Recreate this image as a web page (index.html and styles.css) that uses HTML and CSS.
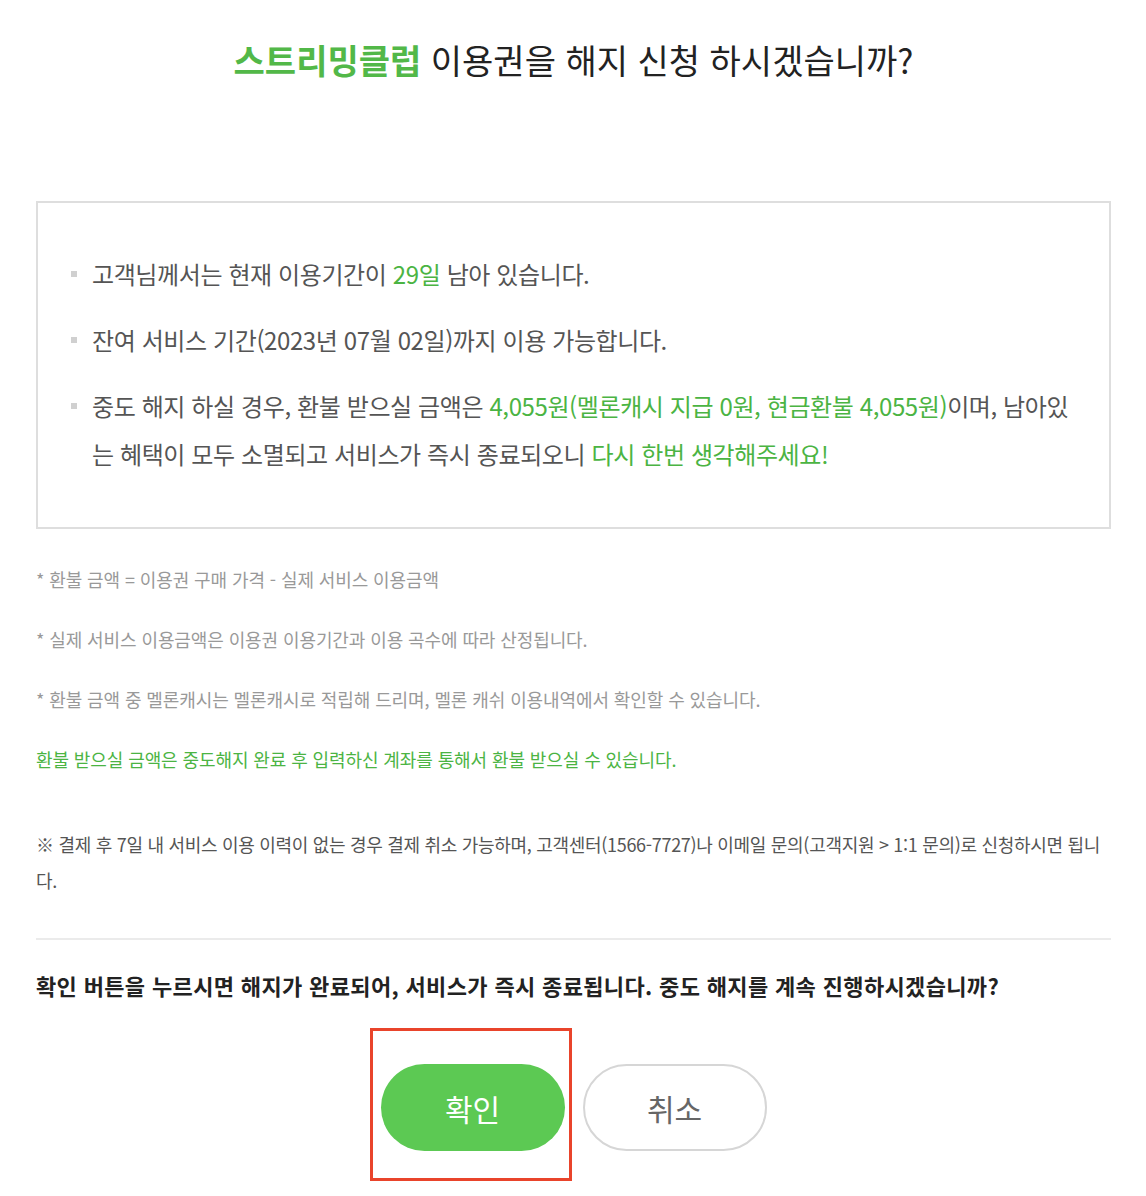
FILE: index.html
```html
<!DOCTYPE html>
<html lang="ko">
<head>
    <meta charset="UTF-8">
    <title>이용권 해지 신청</title>
    <link rel="stylesheet" href="styles.css">
</head>
<body>
    <div class="container">
        <h2 class="title"><strong>스트리밍클럽</strong> 이용권을 해지 신청 하시겠습니까?</h2>

        <div class="info-box">
            <ul class="info-list">
                <li>고객님께서는 현재 이용기간이 <span class="green">29일</span> 남아 있습니다.</li>
                <li>잔여 서비스 기간(2023년 07월 02일)까지 이용 가능합니다.</li>
                <li>중도 해지 하실 경우, 환불 받으실 금액은 <span class="green">4,055원(멜론캐시 지급 0원, 현금환불 4,055원)</span>이며, 남아있는 혜택이 모두 소멸되고 서비스가 즉시 종료되오니 <span class="green">다시 한번 생각해주세요!</span></li>
            </ul>
        </div>

        <!-- notes -->
        <div class="notes">
            <p>* 환불 금액 = 이용권 구매 가격 - 실제 서비스 이용금액</p>
            <p>* 실제 서비스 이용금액은 이용권 이용기간과 이용 곡수에 따라 산정됩니다.</p>
            <p>* 환불 금액 중 멜론캐시는 멜론캐시로 적립해 드리며, 멜론 캐쉬 이용내역에서 확인할 수 있습니다.</p>
            <p class="green">환불 받으실 금액은 중도해지 완료 후 입력하신 계좌를 통해서 환불 받으실 수 있습니다.</p>
        </div>

        <p class="cancel-note">※ 결제 후 7일 내 서비스 이용 이력이 없는 경우 결제 취소 가능하며, 고객센터(1566-7727)나 이메일 문의(고객지원 &gt; 1:1 문의)로 신청하시면 됩니다.</p>

        <hr class="divider">

        <p class="confirm-text">확인 버튼을 누르시면 해지가 완료되어, 서비스가 즉시 종료됩니다. 중도 해지를 계속 진행하시겠습니까?</p>

        <div class="buttons">
            <div class="btn-wrap">
                <button type="button" class="btn btn-ok">확인</button>
                <span class="highlight"></span>
            </div>
            <button type="button" class="btn btn-cancel">취소</button>
        </div>
    </div>
</body>
</html>
```

FILE: styles.css
```css
body {
    margin: 0;
    background-color: #fff;
    font-family: "Noto Sans CJK KR", "Noto Sans", sans-serif;
    color: #555;
}

.container {
    padding: 0 35px 0 36px;
}

.green {
    color: #4bb443;
}

.title {
    margin: 37px 0 0;
    font-size: 34px;
    line-height: 46px;
    font-weight: normal;
    text-align: center;
    color: #222;
}

.title strong {
    color: #52b848;
    font-weight: bold;
}

.info-box {
    margin-top: 118px;
    border: 2px solid #dedede;
    padding: 47px 40px 49px 54px;
}

.info-list {
    margin: 0;
    padding: 0;
    list-style: none;
}

.info-list li {
    position: relative;
    font-size: 24px;
    line-height: 48px;
    letter-spacing: -0.4px;
    color: #555;
}

.info-list li + li {
    margin-top: 18px;
}

.info-list li::before {
    content: "";
    position: absolute;
    left: -21px;
    top: 21px;
    width: 6px;
    height: 6px;
    background-color: #d0d0d0;
}

.notes {
    margin-top: 35px;
}

.notes p {
    margin: 0 0 30px;
    font-size: 18px;
    line-height: 30px;
    letter-spacing: -0.1px;
    color: #999;
}

.notes p.green {
    color: #4bb443;
    margin-bottom: 0;
}

.cancel-note {
    margin: 52px 0 0;
    font-size: 18px;
    line-height: 36px;
    letter-spacing: -0.3px;
    color: #555;
}

.divider {
    margin: 40px 0 0;
    border: none;
    border-top: 2px solid #ebebeb;
}

.confirm-text {
    margin: 30px 0 0;
    font-size: 22px;
    line-height: 30px;
    letter-spacing: 0.35px;
    font-weight: bold;
    color: #222;
}

.buttons {
    display: flex;
    justify-content: center;
    gap: 18px;
    margin-top: 64px;
    padding-bottom: 40px;
}

.btn-wrap {
    position: relative;
}

.btn {
    width: 184px;
    height: 87px;
    border-radius: 44px;
    font-family: "Noto Sans CJK KR", "Noto Sans", sans-serif;
    font-size: 30px;
    cursor: pointer;
}

.btn-ok {
    border: none;
    background-color: #5cc953;
    color: #fff;
}

.btn-cancel {
    border: 2px solid #d6d6d6;
    background-color: #fff;
    color: #666;
}

.highlight {
    position: absolute;
    left: -11px;
    top: -36px;
    width: 196px;
    height: 147px;
    border: 3px solid #e9442b;
}
```
